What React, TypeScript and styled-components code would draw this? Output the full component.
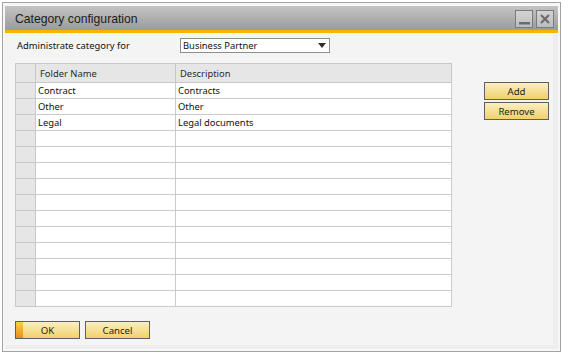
import styled, { createGlobalStyle } from "styled-components";

const GlobalStyle = createGlobalStyle`
  html, body {
    margin: 0;
    padding: 0;
    background: #ffffff;
  }
  body {
    font-family: "Noto Sans", "Liberation Sans", sans-serif;
    font-size: 9.4px;
    color: #111;
  }
`;

const Page = styled.div`
  padding: 2px;
`;

const Window = styled.div`
  width: 559px;
  height: 350px;
  box-sizing: border-box;
  border: 1px solid #a3a3a3;
  background: #f7f7f7;
  padding: 3px 2px 2px 2px;
  display: flex;
  flex-direction: column;
`;

const TitleBar = styled.div`
  height: 24px;
  display: flex;
  align-items: center;
  justify-content: space-between;
  padding: 0 4px 0 10px;
  background: linear-gradient(#c4c4c4, #9b9b9b);
  border-bottom: 3px solid #f7b500;
`;

const Title = styled.span`
  font-family: "Liberation Sans", Arial, sans-serif;
  font-size: 12.2px;
  color: #1b1b1b;
  padding-top: 2px;
`;

const TitleButtons = styled.div`
  display: flex;
  gap: 3px;
  padding-top: 1px;
`;

const TitleButton = styled.div`
  width: 18px;
  height: 18px;
  box-sizing: border-box;
  border: 1px solid #7a7a7a;
  background: linear-gradient(#d4d4d4, #bdbdbd);
  display: flex;
  align-items: center;
  justify-content: center;
`;

const Body = styled.div`
  flex: 1;
  display: flex;
  flex-direction: column;
  padding: 5px 0 0 10px;
  background: #f4f4f4;
  border-right: 5px solid #eeeeee;
  border-bottom: 4px solid #eeeeee;
`;

const TopRow = styled.div`
  display: flex;
  align-items: center;
  height: 15px;
`;

const Label = styled.span`
  width: 163px;
  padding-left: 2px;
`;

const Select = styled.div`
  width: 150px;
  height: 15px;
  box-sizing: border-box;
  border: 1px solid #8e8e8e;
  background: #fff;
  display: flex;
  align-items: center;
  justify-content: space-between;
  padding: 0 3px 0 2px;
`;

const Middle = styled.div`
  display: flex;
  margin-top: 10px;
  gap: 32px;
`;

const Grid = styled.table`
  width: 437px;
  flex-shrink: 0;
  border-collapse: collapse;
  table-layout: fixed;
  border: 1px solid #c4c4c4;
  background: #fff;
`;

const HeadCell = styled.th`
  height: 18px;
  padding: 0 0 0 4px;
  text-align: left;
  font-weight: normal;
  color: #2a2a2a;
  background: #e6e6e6;
  border: 1px solid #c8c8c8;
`;

const RowHead = styled.td`
  background: #e6e6e6;
  border: 1px solid #c8c8c8;
  padding: 0;
`;

const Cell = styled.td`
  height: 15px;
  padding: 0 0 0 2px;
  border: 1px solid #cbcbcb;
  white-space: nowrap;
`;

const SideButtons = styled.div`
  display: flex;
  flex-direction: column;
  gap: 2px;
  padding-top: 19px;
`;

const Button = styled.button<{ $focus?: boolean }>`
  width: 65px;
  height: 18px;
  box-sizing: border-box;
  border: 1px solid #5f5f5f;
  border-radius: 0;
  padding: 0;
  font-family: "Noto Sans", "Liberation Sans", sans-serif;
  font-size: 9.6px;
  color: #1b1b1b;
  background: ${(p) =>
    p.$focus
      ? "linear-gradient(#f7cf45, #ee8e1c) left / 7px 100% no-repeat, linear-gradient(#fbefc0, #f2d16a)"
      : "linear-gradient(#fbefc0, #f2d16a)"};
`;

const Footer = styled.div`
  display: flex;
  gap: 5px;
  margin-top: 14px;
`;

const rows = [
  ["Contract", "Contracts"],
  ["Other", "Other"],
  ["Legal", "Legal documents"],
];

export default function App() {
  const filled = [...rows];
  while (filled.length < 14) filled.push(["", ""]);

  return (
    <Page>
      <GlobalStyle />
      <Window>
        <TitleBar>
          <Title>Category configuration</Title>
          <TitleButtons>
            <TitleButton>
              <svg width="16" height="16" viewBox="0 0 16 16">
                <rect x="3" y="11" width="11" height="2.5" fill="#6b6b6b" />
              </svg>
            </TitleButton>
            <TitleButton>
              <svg width="16" height="16" viewBox="0 0 16 16">
                <path d="M4 4 L12 12 M12 4 L4 12" stroke="#6b6b6b" strokeWidth="2.2" />
              </svg>
            </TitleButton>
          </TitleButtons>
        </TitleBar>
        <Body>
          <TopRow>
            <Label>Administrate category for</Label>
            <Select>
              <span>Business Partner</span>
              <svg width="8" height="5" viewBox="0 0 8 5">
                <path d="M0 0 H8 L4 5 Z" fill="#2e2e2e" />
              </svg>
            </Select>
          </TopRow>
          <Middle>
            <Grid>
              <colgroup>
                <col style={{ width: 20 }} />
                <col style={{ width: 140 }} />
                <col />
              </colgroup>
              <thead>
                <tr>
                  <HeadCell />
                  <HeadCell>Folder Name</HeadCell>
                  <HeadCell>Description</HeadCell>
                </tr>
              </thead>
              <tbody>
                {filled.map((r, i) => (
                  <tr key={i}>
                    <RowHead />
                    <Cell>{r[0]}</Cell>
                    <Cell>{r[1]}</Cell>
                  </tr>
                ))}
              </tbody>
            </Grid>
            <SideButtons>
              <Button>Add</Button>
              <Button>Remove</Button>
            </SideButtons>
          </Middle>
          <Footer>
            <Button $focus>OK</Button>
            <Button>Cancel</Button>
          </Footer>
        </Body>
      </Window>
    </Page>
  );
}
